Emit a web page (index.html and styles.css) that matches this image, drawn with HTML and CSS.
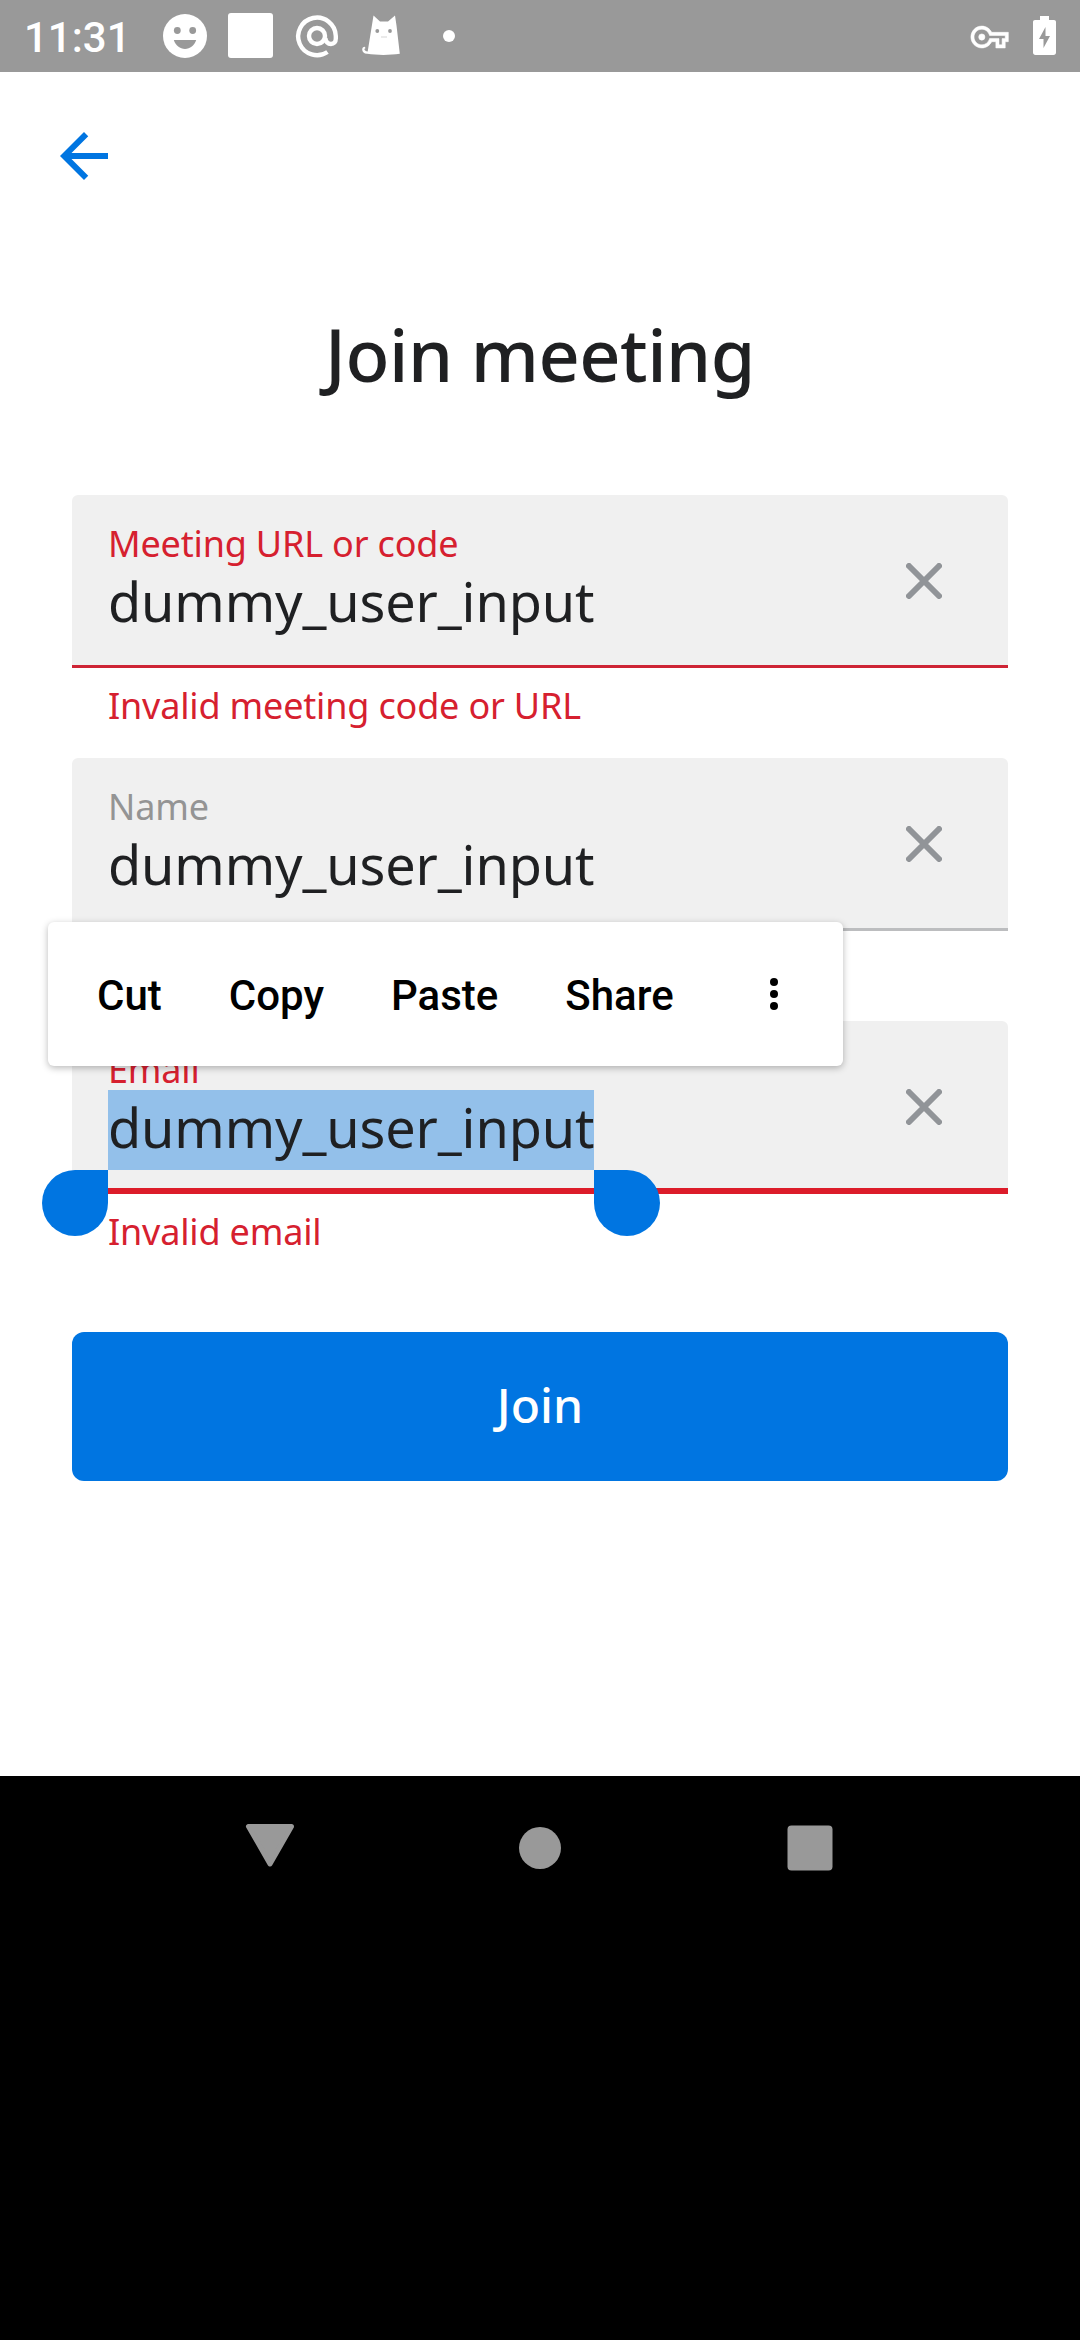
FILE: index.html
```html
<!DOCTYPE html>
<html lang="en">
<head>
<meta charset="utf-8">
<title>Join meeting</title>
<link rel="stylesheet" href="styles.css">
</head>
<body>
<header class="status-bar">
  <span class="clock">11:31</span>
  <svg class="status-left" width="310" height="72" viewBox="150 0 310 72" fill="#fff">
    <circle cx="185" cy="36" r="22"/>
    <g fill="#999"><circle cx="177.3" cy="30.5" r="3.4"/><circle cx="192.7" cy="30.5" r="3.4"/><path d="M173.8 40h22.4c-1.8 5.4-6.2 9-11.2 9s-9.400-3.600-11.200-9z"/></g>
    <rect x="228" y="13" width="45" height="45" rx="3"/>
    <g fill="none" stroke="#fff" stroke-width="4.400"><circle cx="317" cy="36" r="8"/><path d="M327.500 52A18.800 18.800 0 1 1 335.800 36v2.500c0 3.500-2 5.500-4.800 5.500-3.200 0-5.200-2.400-5.700-6"/></g>
    <path d="M373.500 15.500l6.500 6h8l7-6 1.500 10 3.300 28.300c-10 1.500-23 1.500-32.500 0-3 .2-5-2-5.100-4-.1-1.800 1-3 2.800-3l.4 1.500c-1.500.4-1.500 2.800 2.300 3.200z"/>
    <g fill="#999"><circle cx="377.300" cy="31" r="1.900"/><circle cx="390" cy="31" r="1.900"/><rect x="381" y="36.500" width="6" height="1" opacity=".4"/></g>
    <circle cx="449" cy="36" r="6"/>
  </svg>
  <svg class="status-right" width="100" height="72" viewBox="960 0 100 72" fill="#fff">
    <path transform="translate(970.900 18.300) scale(1.560)" stroke="#fff" stroke-width=".35" d="M22 19h-6v-4h-2.680c-1.140 2.420-3.600 4-6.320 4-3.860 0-7-3.140-7-7s3.140-7 7-7c2.720 0 5.170 1.580 6.320 4H24v6h-2v4zm-4-2h2v-4h2v-2H11.940l-.23-.67C11.010 8.340 9.110 7 7 7c-2.760 0-5 2.240-5 5s2.240 5 5 5c2.110 0 4.010-1.340 4.710-3.330l.23-.67H18v4zM7 14a2 2 0 1 1 0-4 2 2 0 0 1 0 4z"/>
    <path d="M1040 16h9v4h5c1.200 0 2 .8 2 2v30.500c0 1.500-1 2.500-2.500 2.500h-18c-1.500 0-2.500-1-2.500-2.500V22c0-1.200.8-2 2-2h5z"/>
    <path fill="#999" d="M1045.500 27l-6.500 12h4.500v9l6.500-12h-4.500z"/>
  </svg>
</header>
<main class="screen">
  <button class="back" aria-label="Back">
    <svg width="72" height="72" viewBox="0 0 24 24" fill="#0075e1"><path d="M20 11H7.830l5.590-5.590L12 4l-8 8 8 8 1.410-1.410L7.830 13H20z"/></svg>
  </button>
  <h1 class="title">Join meeting</h1>
  <form class="form">
    <div class="field invalid">
      <div class="texts"><span class="label">Meeting URL or code</span><span class="value">dummy_user_input</span></div>
      <svg class="clear" viewBox="0 0 36 36"><path d="M3 3l30 30M33 3L3 33"/></svg>
    </div>
    <p class="helper">Invalid meeting code or URL</p>
    <div class="field">
      <div class="texts"><span class="label">Name</span><span class="value">dummy_user_input</span></div>
      <svg class="clear" viewBox="0 0 36 36"><path d="M3 3l30 30M33 3L3 33"/></svg>
    </div>
    <p class="helper"></p>
    <div class="field invalid focused">
      <div class="texts"><span class="label">Email</span><span class="value selected">dummy_user_input<i class="handle start"></i><i class="handle end"></i></span></div>
      <svg class="clear" viewBox="0 0 36 36"><path d="M3 3l30 30M33 3L3 33"/></svg>
    </div>
    <p class="helper">Invalid email</p>
    <button class="join" type="button">Join</button>
  </form>
  <div class="popup">
    <span>Cut</span><span>Copy</span><span>Paste</span><span>Share</span>
    <svg class="more" width="8" height="32" viewBox="0 0 8 32"><circle cx="4" cy="4" r="4"/><circle cx="4" cy="16" r="4"/><circle cx="4" cy="28" r="4"/></svg>
  </div>
</main>
<nav class="nav-bar">
  <svg viewBox="0 0 270 144"><path d="M113.500 50.500h43l-21.500 37.500z" stroke-width="5" stroke-linejoin="round" stroke="#999"/></svg>
  <svg viewBox="0 0 270 144"><circle cx="135" cy="72" r="21"/></svg>
  <svg viewBox="0 0 270 144"><rect x="112.500" y="49.500" width="45" height="45" rx="4"/></svg>
</nav>
</body>
</html>
```

FILE: styles.css
```css
* { box-sizing: border-box; }
body {
  margin: 0;
  width: 1080px;
  height: 2340px;
  background: #000;
  font-family: "Noto Sans", sans-serif;
  color: #1f2022;
  overflow: hidden;
}
button { border: 0; padding: 0; background: none; font: inherit; }
svg { display: block; }

.status-bar {
  display: flex;
  height: 72px;
  padding: 0 20px 0 24px;
  background: #999;
}
.clock {
  width: 126px;
  font: 500 42px/75px Roboto, sans-serif;
  color: #fff;
  white-space: nowrap;
}
.status-right { margin-left: auto; }

.screen {
  position: relative;
  height: 1704px;
  padding: 48px 72px 0;
  background: #fff;
}
.back { display: block; width: 72px; height: 72px; margin-left: -24px; }
.title {
  margin: 113px 0 0;
  font-size: 72px;
  line-height: 98px;
  font-weight: 500;
  letter-spacing: -.5px;
  text-align: center;
}
.form { margin-top: 92px; }

.field {
  display: flex;
  justify-content: space-between;
  height: 173px;
  padding: 27px 66px 0 36px;
  background: #f0f0f0;
  border-bottom: 3px solid #bcbdbf;
  border-radius: 6px 6px 0 0;
}
.texts { display: flex; flex-direction: column; align-items: flex-start; }
.label {
  height: 42px;
  font-size: 36px;
  line-height: 44px;
  letter-spacing: -.18px;
  color: #949494;
}
.value {
  height: 80px;
  font-size: 54px;
  line-height: 74px;
  letter-spacing: -.13px;
  white-space: nowrap;
}
.clear {
  width: 36px;
  height: 36px;
  margin-top: 41px;
  stroke: #919498;
  stroke-width: 6;
  stroke-linecap: round;
}
.invalid { border-bottom-color: #ce2435; }
.invalid .label, .helper { color: #d6202f; }
.focused { border-bottom: 6px solid #dc1c2a; }
.selected { position: relative; background: #93c0ea; }
.handle {
  position: absolute;
  top: 80px;
  width: 66px;
  height: 66px;
  background: #0075e1;
}
.start { right: 100%; border-radius: 33px 0 33px 33px; }
.end { left: 100%; border-radius: 0 33px 33px 33px; }
.helper {
  height: 90px;
  margin: 0;
  padding: 13px 36px 0;
  font-size: 36px;
  line-height: 49px;
  letter-spacing: -.18px;
}
.join {
  display: block;
  width: 100%;
  height: 149px;
  margin-top: 48px;
  padding-bottom: 5px;
  border-radius: 12px;
  background: #0075e1;
  color: #fff;
  font-size: 48px;
  font-weight: 500;
}

.popup {
  position: absolute;
  left: 48px;
  top: 850px;
  display: flex;
  align-items: center;
  gap: 67px;
  width: 795px;
  height: 144px;
  padding: 0 65px 0 49px;
  border-radius: 6px;
  background: #fff;
  box-shadow: 0 2px 7px rgba(0, 0, 0, .28);
  font: 500 42px/50px Roboto, sans-serif;
  color: #000;
}
.popup span { padding-top: 3px; }
.more { margin: 0 0 0 auto; }

.nav-bar { display: flex; justify-content: center; height: 144px; }
.nav-bar svg { width: 270px; height: 144px; fill: #999; }
```
